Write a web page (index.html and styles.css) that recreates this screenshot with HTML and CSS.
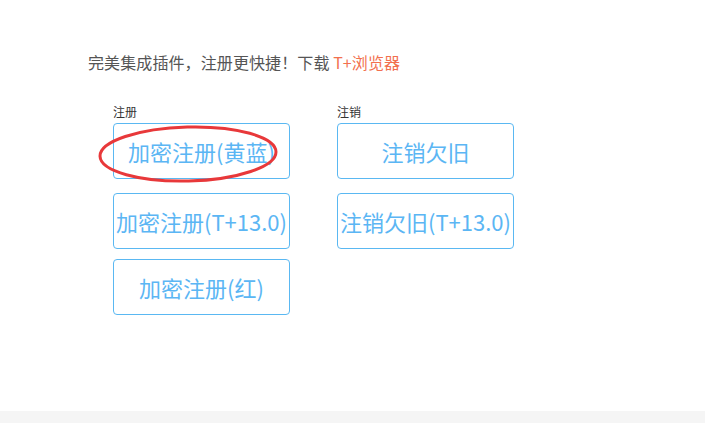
FILE: index.html
```html
<!DOCTYPE html>
<html>
<head>
  <meta charset="utf-8">
  <title>注册插件</title>
  <link rel="stylesheet" href="styles.css">
</head>
<body>
  <div class="page">
    <p class="tip">完美集成插件，注册更快捷！下载 <a class="tip-link" href="#">T+浏览器</a></p>

    <div class="groups">
      <div class="group">
        <div class="group-label">注册</div>
        <div class="btn-wrap">
          <button class="btn">加密注册(黄蓝)</button>
          <!-- hand-drawn highlight -->
          <svg class="mark" width="184" height="62" viewBox="0 0 184 62">
            <ellipse cx="92" cy="31" rx="88" ry="27" fill="none" stroke="#e8383a" stroke-width="3" transform="rotate(-1.5 92 31)"/>
          </svg>
        </div>
        <button class="btn second">加密注册(T+13.0)</button>
        <button class="btn third">加密注册(红)</button>
      </div>

      <div class="group">
        <div class="group-label">注销</div>
        <button class="btn">注销欠旧</button>
        <button class="btn second">注销欠旧(T+13.0)</button>
      </div>
    </div>
  </div>

  <div class="bottom-bar"></div>
</body>
</html>
```

FILE: styles.css
```css
body {
  margin: 0;
  background: #fff;
  font-family: "Noto Sans CJK SC", "Noto Sans", sans-serif;
}

.page {
  height: 411px;
  padding: 50px 0 0 88px;
  box-sizing: border-box;
}

.tip {
  margin: 0;
  font-size: 16px;
  line-height: 24px;
  letter-spacing: 0.1px;
  color: #555;
}

.tip-link {
  color: #f2704e;
  text-decoration: none;
}

.groups {
  display: flex;
  gap: 47px;
  margin: 30px 0 0 25px;
}

.group {
  display: flex;
  flex-direction: column;
  width: 177px;
}

.group-label {
  font-size: 12px;
  line-height: 16px;
  color: #333;
  margin-bottom: 3px;
}

.btn-wrap {
  position: relative;
}

.btn {
  display: flex;
  justify-content: center;
  align-items: center;
  width: 177px;
  height: 56px;
  padding: 0;
  border: 1px solid #5ab8f2;
  border-radius: 4px;
  background: #fff;
  color: #5bb6f4;
  font-family: "Noto Sans CJK SC", "Noto Sans", sans-serif;
  font-size: 22px;
  white-space: nowrap;
  overflow: visible;
  cursor: pointer;
}

.btn.second {
  margin-top: 14px;
}

.btn.third {
  margin-top: 10px;
}

.mark {
  position: absolute;
  left: -17px;
  top: 0;
  pointer-events: none;
}

.bottom-bar {
  height: 12px;
  background: #f5f5f5;
}
```
